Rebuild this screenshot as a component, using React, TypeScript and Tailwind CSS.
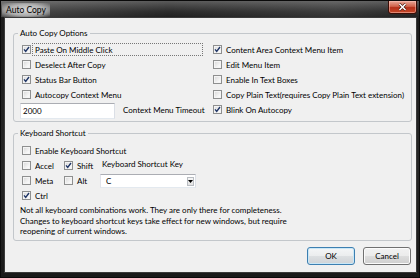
import React from "react";

function Box({ checked }: { checked?: boolean }) {
  return (
    <span className="w-[9px] h-[9px] shrink-0 border border-[#8e8f8f] bg-[linear-gradient(135deg,#d6d6d6,#f6f6f6_70%,#ffffff)] shadow-[inset_0_0_0_1px_#f4f4f4] flex items-center justify-center">
      {checked && (
        <svg width="7" height="7" viewBox="0 0 7 7">
          <path d="M1 3.4 L2.7 5.4 L6 1" stroke="#1f3566" strokeWidth="1.4" fill="none" />
        </svg>
      )}
    </span>
  );
}

function Check({
  label,
  checked,
  focus,
  w,
}: {
  label: string;
  checked?: boolean;
  focus?: boolean;
  w?: string;
}) {
  return (
    <div className="h-[15px] flex items-center">
      <Box checked={checked} />
      <span
        className={
          "ml-[1px] pl-[2px] h-[13px] flex items-center whitespace-nowrap border " +
          (focus ? "border-dotted border-[#777] " : "border-transparent ") +
          (w ?? "")
        }
      >
        {label}
      </span>
    </div>
  );
}

export default function App() {
  return (
    <div className="w-[420px] h-[278px] flex flex-col bg-[linear-gradient(180deg,#5a5a5a_0px,#2e2e2e_10px,#1c1c1c_18px,#262626_60%,#1a1a1a)] border border-[#0a0a0a] font-['Lato',sans-serif] text-[8px] text-black overflow-hidden">
      {/* title bar */}
      <div className="h-[16px] flex items-start bg-[linear-gradient(90deg,rgba(255,255,255,0.15),rgba(255,255,255,0)_40%,rgba(255,255,255,0.08)_80%,rgba(255,255,255,0))]">
        <span className="mt-[2px] ml-[1px] px-[4px] h-[14px] flex items-center text-[8.5px] text-black bg-[radial-gradient(ellipse_at_center,rgba(225,225,225,0.95)_0%,rgba(200,200,200,0.8)_55%,rgba(160,160,160,0)_100%)]">
          Auto Copy
        </span>
        <div className="ml-auto mr-[2px] w-[29px] h-[14px] mt-[-1px] rounded-b-[3px] border border-[#3b0d06] bg-[linear-gradient(180deg,#e9a99a,#d0624a_45%,#b5301a_55%,#c84a2a)] shadow-[inset_0_0_0_1px_rgba(255,200,190,0.5)] flex items-center justify-center">
          <svg width="9" height="8" viewBox="0 0 9 8">
            <path d="M1.5 1 L7.5 7 M7.5 1 L1.5 7" stroke="#3a1208" strokeWidth="2.6" />
            <path d="M1.5 1 L7.5 7 M7.5 1 L1.5 7" stroke="#ffffff" strokeWidth="1.6" />
          </svg>
        </div>
      </div>
      {/* client */}
      <div className="flex-1 ml-[3px] mr-[2px] mb-[4px] border border-[#3a3a3a] bg-[#f0f0f0] flex flex-col">
        <fieldset className="min-w-0 mt-[9px] ml-[8px] mr-[4px] border border-[#c3c7cb] rounded-[3px] pl-[8px] pr-[2px] pb-[2px]">
          <legend className="ml-[-4px] px-[2px] leading-[12px]">Auto Copy Options</legend>
          <div className="flex pt-[3px]">
            <div className="w-[191px] flex flex-col">
              <Check label="Paste On Middle Click" checked focus w="w-[171px]" />
              <Check label="Deselect After Copy" />
              <Check label="Status Bar Button" checked />
              <Check label="Autocopy Context Menu" />
              <div className="flex items-start mt-[1px] ml-[-2px]">
                <div className="w-[95px] h-[16px] border border-[#abadb3] border-l-[#e2e3ea] border-r-[#dbdfe6] border-b-[#e3e9ef] bg-white flex items-center pl-[2px]">
                  2000
                </div>
                <span className="ml-[8px] mt-[1px] whitespace-nowrap">Context Menu Timeout</span>
              </div>
            </div>
            <div className="flex-1 flex flex-col">
              <Check label="Content Area Context Menu Item" checked />
              <Check label="Edit Menu Item" />
              <Check label="Enable In Text Boxes" />
              <Check label="Copy Plain Text(requires Copy Plain Text extension)" />
              <Check label="Blink On Autocopy" checked />
            </div>
          </div>
        </fieldset>
        <fieldset className="min-w-0 mt-[5px] ml-[8px] mr-[4px] border border-[#c3c7cb] rounded-[3px] pl-[8px] pr-[2px] pb-[3px]">
          <legend className="ml-[-4px] px-[2px] leading-[12px]">Keyboard Shortcut</legend>
          <div className="pt-[4px] flex flex-col">
            <Check label="Enable Keyboard Shortcut" />
            <div className="flex">
              <div className="w-[42px] flex flex-col">
                <Check label="Accel" />
                <Check label="Meta" />
                <Check label="Ctrl" checked />
              </div>
              <div className="w-[36px] flex flex-col">
                <Check label="Shift" checked />
                <Check label="Alt" />
              </div>
              <div className="flex flex-col">
                <div className="h-[15px] flex items-center pl-[2px] mt-[-2px] whitespace-nowrap">Keyboard Shortcut Key</div>
                <div className="mt-[3px] w-[96px] h-[14px] border border-[#abadb3] border-l-[#e2e3ea] border-r-[#dbdfe6] border-b-[#e3e9ef] bg-white flex items-center pl-[5px] pr-[1px]">
                  <span className="flex-1">C</span>
                  <span className="w-[7px] h-[9px] border border-[#b9bdc2] bg-[linear-gradient(180deg,#f6f6f6,#e2e2e2)] flex items-center justify-center">
                    <svg width="5" height="3" viewBox="0 0 5 3">
                      <path d="M0 0 L5 0 L2.5 3 Z" fill="#000" />
                    </svg>
                  </span>
                </div>
              </div>
            </div>
            <div className="mt-[2px] ml-[-2px] leading-[10.5px]">
              <div>Not all keyboard combinations work. They are only there for completeness.</div>
              <div>Changes to keyboard shortcut keys take effect for new windows, but require</div>
              <div>reopening of current windows.</div>
            </div>
          </div>
        </fieldset>
        <div className="mt-[6px] mr-[5px] flex justify-end gap-[8px]">
          <button className="w-[48px] h-[18px] rounded-[3px] border border-[#3c7fb1] bg-[linear-gradient(180deg,#f4f6f7,#ebedee_50%,#dde0e2_50%,#cfd3d6)] shadow-[inset_0_0_0_1px_#c9e7f7] text-[8px] flex items-center justify-center">
            OK
          </button>
          <button className="w-[48px] h-[18px] rounded-[3px] border border-[#707070] bg-[linear-gradient(180deg,#f2f2f2,#ebebeb_50%,#dddddd_50%,#cfcfcf)] shadow-[inset_0_0_0_1px_#fbfbfb] text-[8px] flex items-center justify-center">
            Cancel
          </button>
        </div>
      </div>
    </div>
  );
}
